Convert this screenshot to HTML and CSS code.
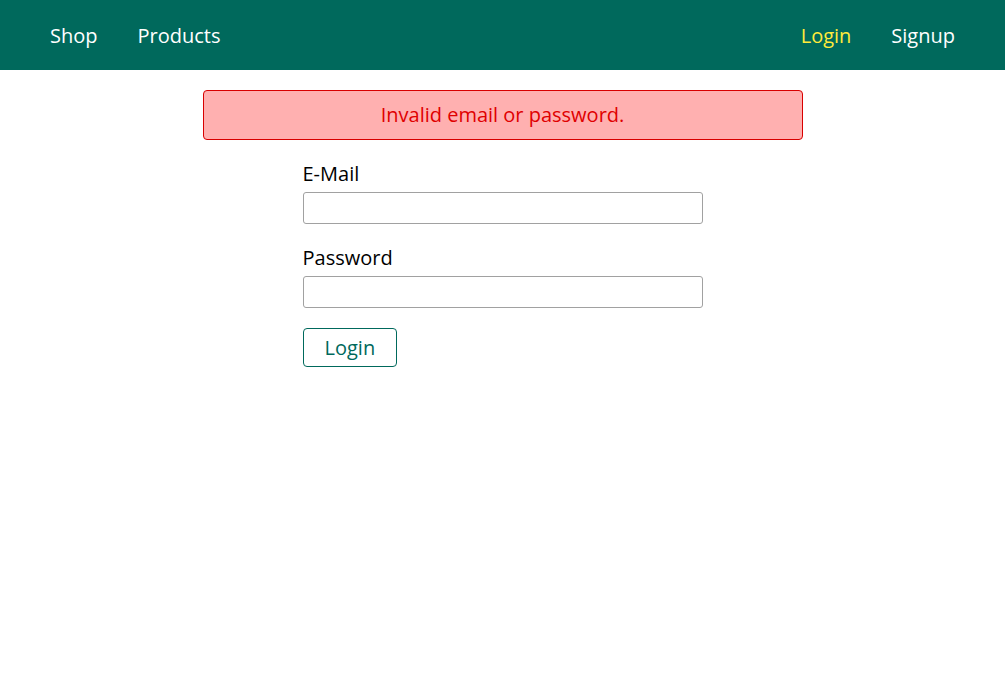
FILE: index.html
```html
<!DOCTYPE html>
<html lang="en">
<head>
<meta charset="UTF-8">
<title>Login</title>
<link rel="stylesheet" href="styles.css">
</head>
<body>
<header class="main-header">
  <nav class="main-header__nav">
    <ul class="main-header__item-list">
      <li class="main-header__item"><a href="#">Shop</a></li>
      <li class="main-header__item"><a href="#">Products</a></li>
    </ul>
    <ul class="main-header__item-list">
      <li class="main-header__item"><a class="active" href="#">Login</a></li>
      <li class="main-header__item"><a href="#">Signup</a></li>
    </ul>
  </nav>
</header>
<main class="main">
  <div class="user-message user-message--error">Invalid email or password.</div>
  <form class="login-form">
    <div class="form-control">
      <label for="email">E-Mail</label>
      <input type="email" id="email" name="email">
    </div>
    <div class="form-control">
      <label for="password">Password</label>
      <input type="password" id="password" name="password">
    </div>
    <button class="btn" type="submit">Login</button>
  </form>
</main>
</body>
</html>
```

FILE: styles.css
```css
* { box-sizing: border-box; }

body {
  margin: 0;
  padding: 0;
  font-family: "Open Sans", "Noto Sans", sans-serif;
  font-size: 20px;
  color: #000;
  background: #fff;
}

.main-header {
  width: 100%;
  height: 70px;
  background-color: #00695c;
  padding: 0 30px;
  display: flex;
  align-items: center;
}

.main-header__nav {
  width: 100%;
  height: 100%;
  display: flex;
  align-items: center;
  justify-content: space-between;
}

.main-header__item-list {
  list-style: none;
  margin: 0;
  padding: 0;
  display: flex;
}

.main-header__item {
  margin: 0 20px;
  padding: 0;
}

.main-header__item a {
  text-decoration: none;
  color: #fff;
}

.main-header__item a.active {
  color: #ffeb3b;
}

.main {
  padding: 20px;
  margin: auto;
}

.user-message {
  margin: auto;
  width: 90%;
  max-width: 600px;
  padding: 10px;
  line-height: 28px;
  border-radius: 4px;
  text-align: center;
}

.user-message--error {
  border: 1px solid #d80000;
  background: rgb(255, 176, 176);
  color: #e00000;
}

.login-form {
  width: 400px;
  max-width: 90%;
  margin: 0 auto;
  display: block;
}

.form-control {
  margin: 20px 0;
}

.form-control label {
  display: block;
  width: 100%;
  margin-bottom: 5px;
}

.form-control input {
  display: block;
  width: 100%;
  height: 32px;
  font: inherit;
  border: 1px solid #a1a1a1;
  border-radius: 3px;
  padding: 2px 5px;
  margin: 0;
  background: #fff;
}

.btn {
  font: inherit;
  border: 1px solid #00695c;
  color: #00695c;
  background: #fff;
  border-radius: 4px;
  padding: 5px 21px;
  cursor: pointer;
  margin: 0;
}
```
